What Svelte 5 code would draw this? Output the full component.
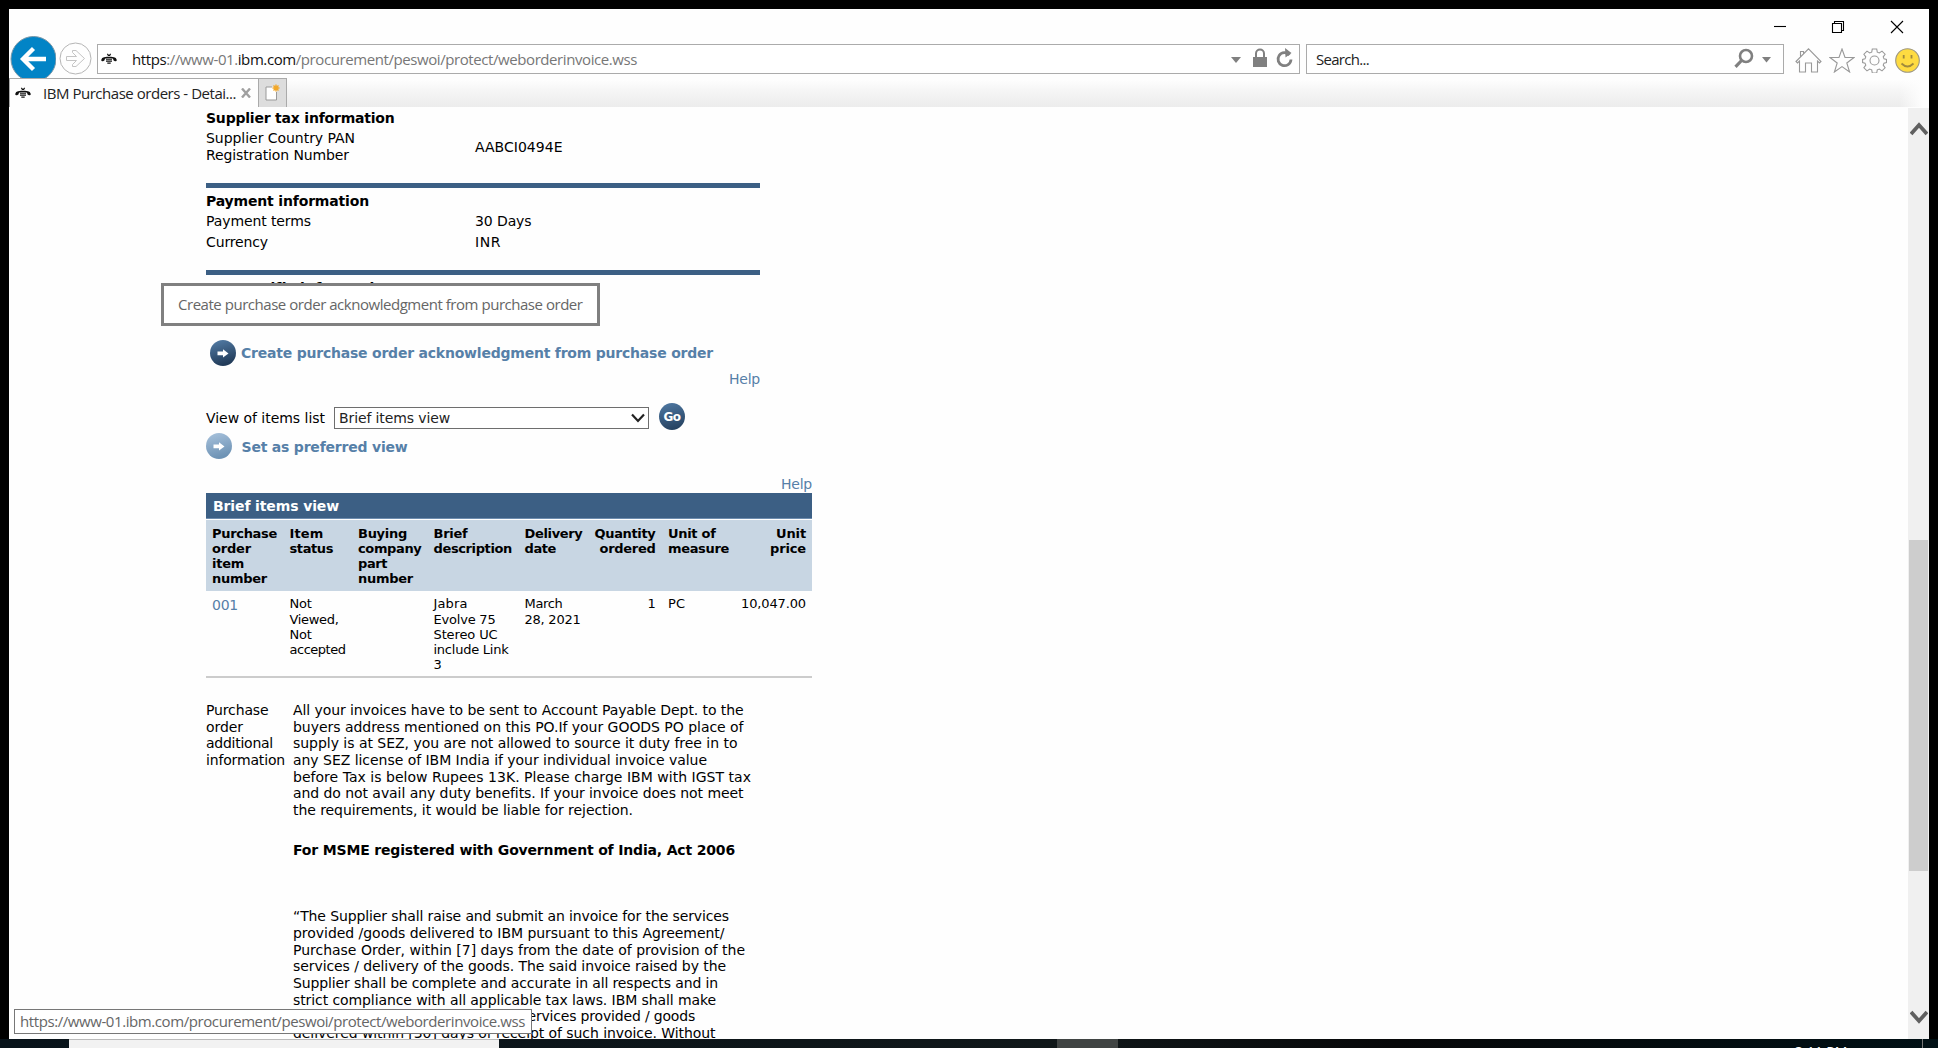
<script>
  // Adjusts tracking so a line of text fills the given width.
  function fit(node, width) {
    if (!width) return;
    const natural = node.getBoundingClientRect().width;
    node.style.letterSpacing = `${(width - natural) / node.textContent.length}px`;
  }

  const columns = [
    { lines: [['Purchase', 65], ['order', 39], ['item', 32], ['number', 55]], cell: [['001', 26]], link: true },
    { lines: [['Item', 34], ['status', 43.5]], cell: [['Not', 22], ['Viewed,', 49], ['Not', 22], ['accepted', 56]] },
    { lines: [['Buying', 49], ['company', 63.5], ['part', 29], ['number', 55]], cell: [] },
    { lines: [['Brief', 34], ['description', 78.5]], cell: [['Jabra', 34], ['Evolve 75', 62], ['Stereo UC', 64], ['include Link', 75], ['3', 8]] },
    { lines: [['Delivery', 58], ['date', 31.5]], cell: [['March', 38], ['28, 2021', 56]] },
    { lines: [['Quantity', 61], ['ordered', 56]], cell: [['1', 8]], right: true },
    { lines: [['Unit of', 47.5], ['measure', 61]], cell: [['PC', 17]] },
    { lines: [['Unit', 30], ['price', 36]], cell: [['10,047.00', 65]], right: true }
  ];

  const label = [['Purchase', 62.5], ['order', 37], ['additional', 67], ['information', 79]];
  const terms = [
    ['All your invoices have to be sent to Account Payable Dept. to the', 450.5],
    ['buyers address mentioned on this PO.If your GOODS PO place of', 450.5],
    ['supply is at SEZ, you are not allowed to source it duty free in to', 444.5],
    ['any SEZ license of IBM India if your individual invoice value', 414],
    ['before Tax is below Rupees 13K. Please charge IBM with IGST tax', 458],
    ['and do not avail any duty benefits. If your invoice does not meet', 450.5],
    ['the requirements, it would be liable for rejection.', 340]
  ];
  const clause = [
    ['“The Supplier shall raise and submit an invoice for the services', 436],
    ['provided /goods delivered to IBM pursuant to this Agreement/', 431.5],
    ['Purchase Order, within [7] days from the date of provision of the', 452],
    ['services / delivery of the goods. The said invoice raised by the', 433],
    ['Supplier shall be complete and accurate in all respects and in', 425],
    ['strict compliance with all applicable tax laws. IBM shall make', 423],
    ['payments to the Supplier for the services provided / goods', 402],
    ['delivered within [30] days of receipt of such invoice. Without', 422.5]
  ];
</script>

{#snippet text(value, width)}<span class="t" use:fit={width}>{value}</span>{/snippet}

{#snippet bee()}
  <svg class="bee" viewBox="0 0 16 12" width="16" height="12">
    <path d="M.2 7Q.8 4.500 3 4.200L6 3.800 6.500 4.800 4 5.800Q3.800 8 2 8.300.2 8.500.2 7ZM15.800 7Q15.200 4.500 13 4.200L10 3.800 9.500 4.800 12 5.800Q12.200 8 14 8.300 15.800 8.500 15.800 7Z" fill="#111" />
    <path d="M6.300.8l.9 1M9.700.8l-.9 1M6.700 2.300h2.600M6 4.300h4M5 6.200h6M5 8.200h6M6.300 10.200h3.400" stroke="#111" stroke-width="1.200" />
  </svg>
{/snippet}

{#snippet arrowBall(light)}
  <svg width="26" height="26" viewBox="0 0 26 26">
    <defs>
      <linearGradient id={light ? 'ballLight' : 'ballDark'} x1="0" y1="0" x2="0.300" y2="1">
        <stop offset="0" stop-color={light ? '#a9c3dd' : '#557fa9'} />
        <stop offset="1" stop-color={light ? '#6e93b5' : '#223c5a'} />
      </linearGradient>
    </defs>
    <circle cx="13" cy="13" r="13" fill={light ? 'url(#ballLight)' : 'url(#ballDark)'} />
    <path d="M7.500 11.500h5.500V9.200l5.500 4.200-5.500 4.200v-2.300H7.500z" fill="#fff" />
  </svg>
{/snippet}

<div class="screen">
  <div class="window">
    <header class="titlebar">
      <svg width="14" height="14" viewBox="0 0 14 14"><path d="M1 6.500h12" /></svg>
      <svg width="14" height="14" viewBox="0 0 14 14"><path d="M1.500 3.500h9v9h-9zM3.500 3.500v-2h9v9h-2" /></svg>
      <svg width="14" height="14" viewBox="0 0 14 14"><path d="M1 1l12 12M13 1 1 13" /></svg>
    </header>

    <div class="toolbar">
      <svg class="back" width="46" height="42" viewBox="0 0 46 42">
        <circle cx="23.500" cy="23" r="22.500" fill="#0284c6" stroke="#7796a8" />
        <path d="M36 23H14M23.500 12.500 13 23l10.500 10.500" fill="none" stroke="#fff" stroke-width="4.300" />
      </svg>
      <svg class="forward" width="33" height="33" viewBox="0 0 33 33" fill="none" stroke="#b5b5b5">
        <circle cx="16.500" cy="16.500" r="15.500" />
        <path d="M7.500 14.500h10l-4-4V8.500h3.500l8.500 8-8.500 8h-3.500v-2l4-4h-10z" stroke="#c4c4c4" />
      </svg>
      <div class="field address">
        {@render bee()}
        <div class="url"><span class="t" use:fit={505}><b>https</b>://www-01.<b>ibm.com</b>/procurement/peswoi/protect/weborderinvoice.wss</span></div>
        <svg width="62" height="22" viewBox="0 0 62 22" fill="#808080">
          <path d="M0 9h10l-5 6z" />
          <path d="M22 9h14v10H22z" />
          <path d="M25 9V5.500a4 4 0 0 1 8 0V9" fill="none" stroke="#808080" stroke-width="2" />
          <path d="M58.500 7A6.500 6.500 0 1 0 60 11.500" fill="none" stroke="#808080" stroke-width="2.800" />
          <path d="M54 0l6.500 5-6 4.500z" />
        </svg>
      </div>
      <div class="field search">
        <div>{@render text('Search...', 53)}</div>
        <svg width="37" height="22" viewBox="0 0 37 22" fill="#808080">
          <circle cx="12" cy="8" r="6" fill="none" stroke="#808080" stroke-width="2.600" />
          <path d="M8 12 1.500 18.800" stroke="#808080" stroke-width="3.200" />
          <path d="M28 9h9l-4.500 5.500z" />
        </svg>
      </div>
      <div class="tools">
        <svg width="27" height="25" viewBox="0 0 27 25"><path d="M1 13.500 13.500.800 26 13.500l-1.500 1.500-2-2V24h-6v-9h-6v9h-6V13l-2 2zM5.500 9V3.500h3V6" /></svg>
        <svg width="26" height="25" viewBox="0 0 26 25"><path d="M13 1l3 8.500h9l-7.200 5.500 2.800 9L13 18.600 5.400 24l2.800-9L1 9.500h9z" /></svg>
        <svg width="25" height="25" viewBox="0 0 25 25">
          <path d="M10.300 1h4.400l.6 3.200 2 .8 2.700-1.900 3.100 3.100-1.900 2.700.8 2 2.500.600v3l-2.500.600-.8 2 1.900 2.700-3.100 3.100-2.700-1.900-2 .8-.6 3.200h-4.400l-.6-3.200-2-.8L5 22.900l-3.100-3.100 1.900-2.700-.8-2-2.400-.600v-3L3 10.900l.8-2L1.900 6.200 5 3.100 7.700 5l2-.8z" />
          <circle cx="12.500" cy="12.500" r="4.500" />
        </svg>
        <svg width="25" height="25" viewBox="0 0 25 25">
          <circle cx="12.500" cy="12.500" r="11.800" fill="#fedb41" stroke="#9c9680" />
          <path d="M8.700 7v3.500M16.500 7v3.500M6.500 15.500q6 6 12 0" stroke="#a08a3c" stroke-width="1.800" />
        </svg>
      </div>
    </div>

    <div class="tabs">
      <div class="tab">
        {@render bee()}
        <div class="name">{@render text('IBM Purchase orders - Detai...', 193)}</div>
        <svg width="10" height="10" viewBox="0 0 10 10"><path d="M1 .500l8 9M9 .500l-8 9" stroke="#a0a0a0" stroke-width="2.400" /></svg>
      </div>
      <div class="newtab">
        <svg width="15" height="17" viewBox="0 0 15 17">
          <path d="M1 3h10.500v13H1z" fill="#fff" /><path d="M1 16V3h6M1 16h10.500V8" fill="none" stroke="#999" />
          <path d="M11 .500v7M7.500 4h7M8.500 1.500l5 5M13.500 1.500l-5 5" stroke="#f2a728" stroke-width="1.400" />
        </svg>
      </div>
    </div>

    <div class="viewport">
      <main>
        <section>
          <h2>{@render text('Supplier tax information', 188.500)}</h2>
          <div class="pair">
            <div><div>{@render text('Supplier Country PAN', 149)}</div><div>{@render text('Registration Number', 143)}</div></div>
            <div>{@render text('AABCI0494E', 87.500)}</div>
          </div>
        </section>
        <section class="ruled">
          <h2>{@render text('Payment information', 163)}</h2>
          <div class="pair"><div>{@render text('Payment terms', 105)}</div><div>{@render text('30 Days', 56.500)}</div></div>
          <div class="pair next"><div>{@render text('Currency', 62)}</div><div>{@render text('INR', 26)}</div></div>
        </section>
        <section class="ruled">
          <h2>{@render text('PO specific information', 188)}</h2>
        </section>

        <a class="action create">{@render arrowBall(false)}{@render text('Create purchase order acknowledgment from purchase order', 472)}</a>
        <a class="help">{@render text('Help', 31)}</a>
        <div class="chooser">
          <span class="caption">{@render text('View of items list', 119)}</span>
          <div class="select">
            {@render text('Brief items view', 111)}
            <svg width="14" height="10" viewBox="0 0 14 10"><path d="M1 1.500l6 6.500 6-6.500" fill="none" stroke="#222" stroke-width="2.200" /></svg>
          </div>
          <div class="go">Go</div>
        </div>
        <a class="action preferred">{@render arrowBall(true)}{@render text('Set as preferred view', 166)}</a>
        <a class="help wide">{@render text('Help', 31)}</a>

        <div class="items">
          <div class="caption-bar">{@render text('Brief items view', 126)}</div>
          <div class="grid head">
            {#each columns as c}
              <div class:right={c.right}>{#each c.lines as [s, w]}<div>{@render text(s, w)}</div>{/each}</div>
            {/each}
          </div>
          <div class="grid body">
            {#each columns as c}
              <div class:right={c.right} class:link={c.link}>{#each c.cell as [s, w]}<div>{@render text(s, w)}</div>{/each}</div>
            {/each}
          </div>
        </div>

        <div class="notes">
          <div>{#each label as [s, w]}<div>{@render text(s, w)}</div>{/each}</div>
          <div>
            {#each terms as [s, w]}<div>{@render text(s, w)}</div>{/each}
            <h3>{@render text('For MSME registered with Government of India, Act 2006', 442)}</h3>
            {#each clause as [s, w]}<div>{@render text(s, w)}</div>{/each}
          </div>
        </div>
      </main>

      <div class="scrollbar">
        <svg width="18" height="14" viewBox="0 0 18 14"><path d="M1 12 9 3l8 9" /></svg>
        <div class="thumb"></div>
        <svg width="18" height="14" viewBox="0 0 18 14"><path d="M1 2l8 9 8-9" /></svg>
      </div>
    </div>
  </div>

  <div class="taskbar">
    <div class="taskfield"></div>
    <div class="running"></div>
    <div class="clock">3:11 PM</div>
    <div class="peek"></div>
  </div>

  <div class="tooltip">{@render text('Create purchase order acknowledgment from purchase order', 404.500)}</div>
  <div class="status">{@render text('https://www-01.ibm.com/procurement/peswoi/protect/weborderinvoice.wss', 505)}</div>
</div>

<style>
  :global(body) { margin: 0; background: #000; overflow: hidden; }
  * { box-sizing: border-box; }
  svg { display: block; flex: none; }
  .t { display: inline-block; white-space: pre; }
  .screen {
    position: relative; width: 1938px; height: 1048px; overflow: hidden; background: #000;
    padding: 9px 9px 0; display: flex; flex-direction: column;
  }
  .window { height: 1030px; flex: none; background: #fefefe; display: flex; flex-direction: column; overflow: hidden; }

  .titlebar { height: 27px; flex: none; display: flex; justify-content: flex-end; gap: 44px; padding: 11px 25px 0 0; }
  .titlebar svg { fill: none; stroke: #000; stroke-width: 1.100; }
  .titlebar svg:last-child { margin-left: 1px; }

  .toolbar { height: 42px; flex: none; display: flex; align-items: flex-start; padding-left: 1px; font: 15px/27px 'Open Sans', sans-serif; color: #222; }
  .forward { margin: 6px 6px 0 4px; }
  .back { margin-right: -1px; }
  .field { height: 30px; margin-top: 8px; border: 1px solid #ababab; background: #fff; display: flex; align-items: center; }
  .address { width: 1203px; padding: 0 6px 0 3px; color: #777; margin-left: -1px; }
  .address .url { margin-left: 15px; flex: 1; }
  .url b { font-weight: 400; color: #111; }
  .search { width: 478px; margin-left: 6px; padding: 0 12px 0 9px; justify-content: space-between; }
  .tools { display: flex; gap: 7px; margin: 12px 0 0 11px; }
  .tools svg { fill: none; stroke: #999; stroke-width: 1.100; }
  .tools svg:last-child { margin-left: 1px; }

  .tabs { height: 29px; flex: none; display: flex; background: linear-gradient(#fefefe 5%, #f5f5f5 45%, #ececec); position: relative; }
  .tabs::after { content: ''; position: absolute; right: 0; top: 0; bottom: 0; width: 30px; background: linear-gradient(90deg, #fefefe00, #fefefe 80%); }
  .tab { width: 249px; background: #fefefe; border: 1px solid #aaa; border-bottom: 0; border-right: 0; display: flex; align-items: center; padding-left: 5px; font: 15px/27px 'Open Sans', sans-serif; color: #222; }
  .tab .name { width: 198px; margin-left: 12px; }
  .newtab { width: 29px; background: #ddd; border: 1px solid #aaa; border-bottom: 0; padding: 5px 0 0 6px; }

  .viewport { height: 932px; flex: none; display: flex; justify-content: space-between; overflow: hidden; }
  main { padding: 3px 0 0 197px; width: 900px; font: 14px/17px 'DejaVu Sans', sans-serif; color: #000; }
  section { width: 554px; padding-bottom: 19px; }
  section.ruled { border-top: 5px solid #3c5f84; padding-top: 5px; }
  section:nth-of-type(3) { padding-bottom: 0; }
  h2, h3 { margin: 0; font-size: 14px; line-height: inherit; font-weight: 700; }
  .pair { display: grid; grid-template-columns: 269px 1fr; align-items: center; margin-top: 3px; }
  .pair.next { margin-top: 4px; }
  .pair > div > div { height: 17px; }
  a, .link { color: #5680a8; }
  .action { display: flex; align-items: center; height: 26px; font-weight: 700; }
  .create { margin: 43px 0 0 4px; gap: 5px; }
  .preferred { margin-top: 3px; gap: 9.500px; }
  .preferred .t { padding-top: 2px; }
  .help { display: flex; justify-content: flex-end; width: 554px; height: 17px; margin-top: 5px; }
  .help.wide { width: 606px; margin-top: 17px; }
  .chooser { display: flex; align-items: center; height: 27px; margin-top: 15px; }
  .caption { width: 128px; padding-top: 4px; }
  .select { width: 315px; height: 22px; margin-top: 3px; border: 1px solid #6e6e6e; background: #fff; display: flex; align-items: center; justify-content: space-between; padding: 0 3px 0 4px; color: #222; }
  .go { width: 26px; height: 27px; margin-left: 10px; border-radius: 50%; background: linear-gradient(165deg, #507aa4, #213b59); color: #fff; font: 700 12px/28px 'DejaVu Sans', sans-serif; text-align: center; letter-spacing: -.5px; }

  .items { width: 606px; font-size: 13px; line-height: 15px; }
  .caption-bar { height: 26px; border-bottom: 1px solid #6d8cae; background: #3c5f84; color: #fff; font-size: 14px; font-weight: 700; line-height: 26px; padding-left: 7px; }
  .grid { display: grid; grid-template-columns: 77.500px 68.500px 75.500px 91px 60px 71px 68px 70px; padding: 6px 0 0 6px; }
  .grid > :nth-child(n + 7) { position: relative; }
  .grid { grid-template-columns: 77.500px 68.500px 75.500px 91px 60px 83.500px 68px 70px; }
  .right { text-align: right; }
  .grid > :nth-child(6) { padding-right: 12.500px; }
  .head { height: 71px; margin-top: 1px; background: #c8d6e3; font-weight: 700; }
  .body { height: 87px; padding-top: 5.300px; line-height: 15.250px; border-bottom: 2px solid #ccc; }
  .body > div > div, .head > div > div { height: 1lh; }
  .body .link { font-size: 14px; line-height: 19px; }

  .notes { display: grid; grid-template-columns: 87px 1fr; margin-top: 24px; line-height: 16.650px; }
  .notes > div > div { height: 16.650px; }
  h3 { height: 16.650px; margin: 24px 0 49.200px; }

  .scrollbar { width: 21px; background: #f0f0f0; display: flex; flex-direction: column; align-items: center; padding: 14px 0 15px; margin-top: 1px; }
  .scrollbar svg { fill: none; stroke: #606060; stroke-width: 3.800; }
  .thumb { width: 19px; height: 331px; background: #cdcdcd; margin: 404px 0 auto; }

  .taskbar { height: 9px; flex: none; display: flex; margin: 0 -9px 0; padding-left: 69px; background: linear-gradient(90deg, #08131a, #101719 55%, #070809 72%, #001015); overflow: hidden; }
  .taskfield { width: 430px; background: #f2f2f2; border-top: 1px solid #bbb; }
  .running { width: 61px; margin-left: 558px; background: #404443; }
  .clock { margin: 4px 0 0 677px; color: #fff; font: 14px/17px 'Open Sans', sans-serif; width: 127px; flex: none; }
  .peek { width: 1px; background: #777; }

  .tooltip { position: absolute; left: 161px; top: 283px; width: 439px; height: 43px; border: 3px solid #808080; background: #fff; padding-left: 14px; font: 15px/37px 'Open Sans', sans-serif; color: #666; }
  .status { position: absolute; left: 14px; top: 1009px; width: 518px; height: 25px; border: 1px solid #777; background: #fff; padding-left: 5px; font: 15px/23px 'Open Sans', sans-serif; color: #666; }
</style>
